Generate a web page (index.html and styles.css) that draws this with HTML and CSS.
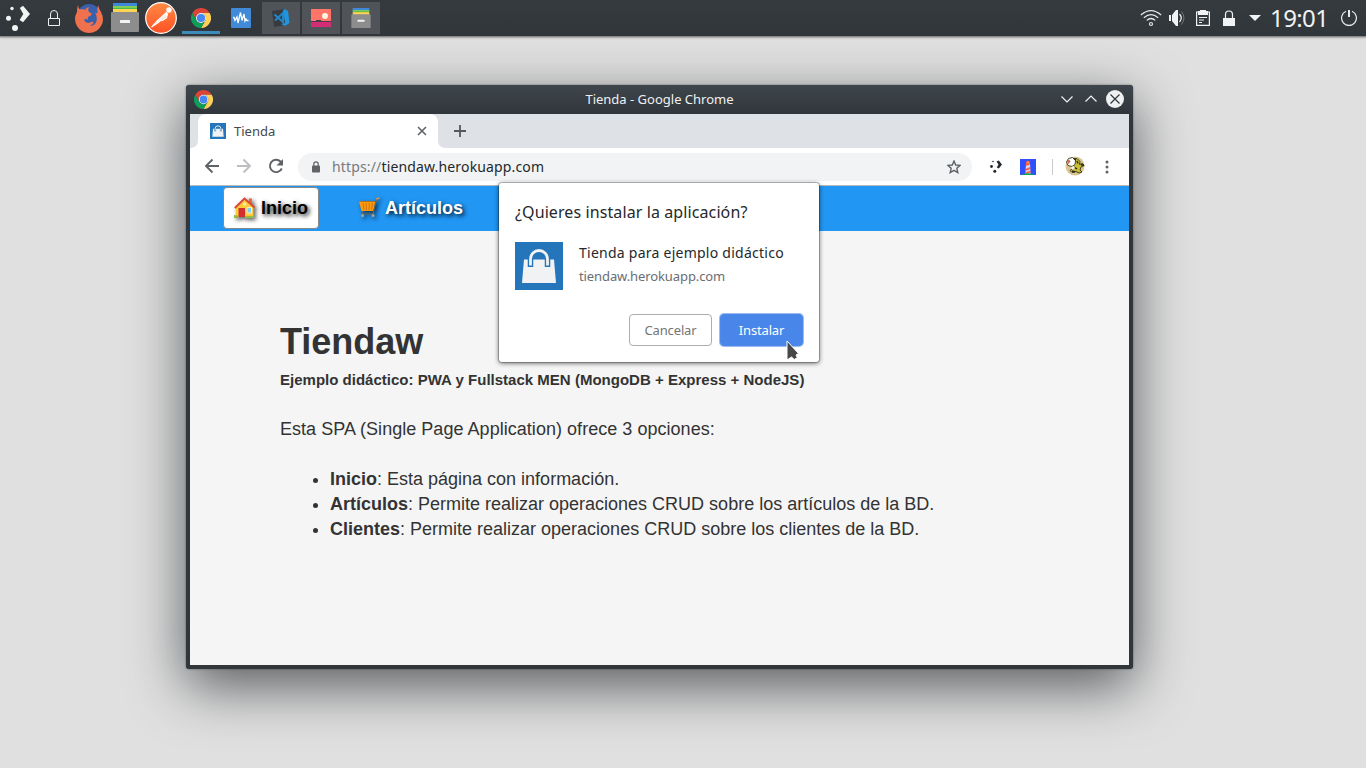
FILE: index.html
```html
<!DOCTYPE html>
<html lang="es">
<head>
<meta charset="utf-8">
<title>Tienda</title>
<link rel="stylesheet" href="styles.css">
</head>
<body>
<svg class="defs" width="0" height="0" aria-hidden="true">
  <defs>
    <linearGradient id="orange" x1="0" y1="0" x2="0" y2="1"><stop offset="0" stop-color="#ff8a45"/><stop offset="1" stop-color="#ff5124"/></linearGradient>
  </defs>
  <symbol id="chrome" viewBox="0 0 48 48">
    <path fill="#dc4437" d="M3.2 12A24 24 0 0 1 44.8 12H24A12 12 0 0 0 13.6 30Z"/>
    <path fill="#ffd057" d="M44.8 12A24 24 0 0 1 24 48L34.4 30A12 12 0 0 0 24 12Z"/>
    <path fill="#109d58" d="M24 48A24 24 0 0 1 3.2 12L13.6 30A12 12 0 0 0 34.4 30Z"/>
    <circle cx="24" cy="24" r="12" fill="#f4f4f4"/><circle cx="24" cy="24" r="9.8" fill="#4687f4"/>
  </symbol>
  <symbol id="drawer" viewBox="0 0 28 29">
    <path fill="#3f87d9" d="M2 0h24v4H2z"/><path fill="#7dce55" d="M2 3h24v3H2z"/><path fill="#4aba4e" d="M2 5h24v1H2z"/><path fill="#ffd452" d="M2 6h24v4H2z"/>
    <path fill="#8d8d8d" d="M1 9h26q1 0 1 1v18q0 1-1 1H1q-1 0-1-1V10q0-1 1-1z"/><rect x="9" y="17" width="10" height="3" rx=".6" fill="#f3f3f3"/>
  </symbol>
  <symbol id="bag" viewBox="0 0 48 48">
    <path fill="#2575ba" d="M0 0h48v48H0z"/><path fill="#f1f2f3" d="M9 17.500h30l2 23.500H7z"/>
    <path fill="none" stroke="#2575ba" stroke-width="5.500" d="M15.500 25v-8a8.500 8.500 0 0 1 17 0v8"/>
    <path fill="none" stroke="#f1f2f3" stroke-width="2.800" d="M15.500 23.500V17a8.500 8.500 0 0 1 17 0v6.500"/>
  </symbol>
</svg>

<header class="panel">
  <div class="launchers">
    <span class="cell"><svg width="26" height="28" viewBox="0 0 26 28" fill="#f3f4f4"><circle cx="7" cy="4.500" r="1.700"/><circle cx="3.500" cy="14.300" r="2.500"/><circle cx="10" cy="24" r="3"/><path d="M14.500 4.500l3.200-2.200 7 8.200-7 8.200-3.400-2.300 3.700-5.900z" transform="translate(.3 -.5)"/></svg></span>
    <span class="cell"><svg width="14" height="18" viewBox="0 0 14 18" fill="none" stroke="#eff0f1"><path d="M1.500 9.500h11v7h-11zM3.500 9V5a3.500 3.500 0 0 1 7 0v4"/></svg></span>
    <span class="cell"><svg class="firefox" width="28" height="30" viewBox="0 0 28 30"><circle cx="14" cy="12.500" r="11.500" fill="#3860ad"/><path fill="#f0714d" d="M3 2Q3 5 5 6.500 8 5.500 10 7q1-2.500 4-3-1.500 3 0 5 1.500 1 3 1.500-.5 2-4 3.500-.5 2 0 3-3-2-4 0 2 4 6 2.500 2-1 3.500-.5 0 2-3.500 3.500 5 1 6.500-4.500 1-5-1.500-8.500l2.500 1Q22 6 23 2q1 4 3 7 4 8 0 14-4 7-12 7T2 23q-4-7 0-14Q2 4 3 2z"/></svg></span>
    <span class="cell"><svg class="files" width="28" height="29"><use href="#drawer"/></svg></span>
    <span class="cell"><svg class="postman" width="32" height="32" viewBox="0 0 32 32"><circle cx="16" cy="16" r="15.300" fill="url(#orange)" stroke="#fff" stroke-width="1.200"/><circle cx="24" cy="8" r="2.700" fill="#fff"/><path d="M21.500 10.500L12 19l1.500 1.500L22.500 12zM12 19l-5.500 6 7-4.500zM22.500 12l-1 4-5 3" fill="#fff" fill-opacity=".75" stroke="#fff" stroke-width="1.100"/></svg></span>
  </div>
  <div class="tasks">
    <span class="task active"><svg width="20" height="20"><use href="#chrome"/></svg></span>
    <span class="task"><svg width="20" height="20" viewBox="0 0 20 20"><rect width="20" height="20" rx="1" fill="#408ad8"/><path fill="none" stroke="#fff" stroke-width="1.300" d="M2 9.500h1l1 3L6 9l1 6L9.500 4.500l1.500 8 2-6.500 1 7 1-2 1 1.500h1.500"/></svg></span>
    <span class="task open"><svg width="20" height="20" viewBox="0 0 20 20"><path fill="#373b40" d="M1 3l13-2 2 16-13 2z"/><path fill="none" stroke="#2286c9" stroke-width="2" d="M3.500 6.500L12 14V5L4 12.500"/><path fill="#2095dd" d="M12 2l2-1 3 2 1.500 12-4.500 3-4-2 4-1z"/></svg></span>
    <span class="task open"><svg width="20" height="18" viewBox="0 0 20 18"><path fill="#ff7568" d="M0 0h20v13H0z"/><path fill="#4b3c4a" d="M0 12h20v1H0zM5 11h5v1H5z"/><path fill="#d32d76" d="M0 13h20v5H0z"/><circle cx="14" cy="7" r="3" fill="#fff6df"/></svg></span>
    <span class="task open"><svg width="20" height="20"><use href="#drawer"/></svg></span>
  </div>
  <div class="tray">
    <span class="tray-cell"><svg width="22" height="18" viewBox="0 0 22 18" fill="none" stroke="#e6e8e9" stroke-width="1.200"><path d="M.8 6Q11-2.800 21.200 6M3.800 8.700q7.200-6.200 14.400 0M6.700 11.400q4.300-3.800 8.600 0"/><circle cx="11" cy="15" r="1.500"/></svg></span>
    <span class="tray-cell"><svg width="18" height="18" viewBox="0 0 18 18"><path fill="#f1f2f3" d="M1 6h2v6H1zM4 6l4-5h2v16H8l-4-5z"/><path fill="none" stroke="#f1f2f3" stroke-width="1.200" d="M11.500 5q3.500 4 0 8"/><path fill="none" stroke="#737678" d="M13.500 2.500q5 6.500 0 13"/></svg></span>
    <span class="tray-cell"><svg width="14" height="16" viewBox="0 0 14 16"><path fill="#f1f2f3" d="M4 0h6v1h2v4H2V1h2z"/><path fill="none" stroke="#f1f2f3" stroke-width="1.200" d="M.6 2v13.400h12.800V2zM3 7.500h8M3 10h5M3 12.500h3"/></svg></span>
    <span class="tray-cell"><svg width="12" height="16" viewBox="0 0 12 16"><path fill="#f1f2f3" d="M0 8h12v8H0z"/><path fill="none" stroke="#f1f2f3" stroke-width="1.200" d="M2.500 8V4.500a3.500 3.500 0 0 1 7 0V8"/></svg></span>
    <span class="tray-cell"><svg width="12" height="6" viewBox="0 0 12 6"><path fill="#f1f2f3" d="M0 0h12L6 6z"/></svg></span>
    <span class="clock">19:01</span>
    <span class="power"><svg width="16" height="16" viewBox="0 0 16 16" fill="none" stroke="#e8eaeb" stroke-width="1.200"><path d="M5 1.200a7.400 7.400 0 1 0 6 0"/><path stroke-width="2" d="M8 0v7"/></svg></span>
  </div>
</header>

<main class="window">
  <div class="titlebar">
    <svg class="app-icon" width="19" height="19"><use href="#chrome"/></svg>
    <span class="window-title">Tienda - Google Chrome</span>
    <svg class="window-buttons" width="63" height="18" viewBox="0 0 63 18" fill="none" stroke="#f1f2f3" stroke-width="1.200"><path d="M.5 6.500L6 12l5.500-5.500M24.500 11.500L30 6l5.500 5.500"/><circle cx="54" cy="9" r="9" fill="#eff0f1" stroke="none"/><path stroke="#30353a" d="M49.500 4.500l9 9m0-9l-9 9"/></svg>
  </div>
  <div class="browser">
    <div class="tabstrip">
      <div class="tab"><svg width="16" height="16"><use href="#bag"/></svg><span class="tab-label">Tienda</span><svg width="10" height="10" viewBox="0 0 10 10" stroke="#5f6368" stroke-width="1.600"><path d="M1 1l8 8m0-8L1 9"/></svg></div>
      <svg class="new-tab" width="12" height="12" viewBox="0 0 12 12" stroke="#55595e" stroke-width="1.800"><path d="M6 0v12M0 6h12"/></svg>
    </div>
    <div class="toolbar">
      <svg class="navigation" width="82" height="16" viewBox="0 0 82 16" fill="none" stroke="#5f6368" stroke-width="1.900"><path d="M15 8H2m6.500-6.500L2 8l6.500 6.500"/><path stroke="#bcbec1" d="M33 8h13m-6.500-6.500L46 8l-6.500 6.500"/><path d="M77.800 10.500A6.200 6.200 0 1 1 76.500 3.500L78 5"/><path fill="#5f6368" stroke="none" d="M79 1v6.500h-6.500z"/></svg>
      <div class="address">
        <svg width="8" height="12" viewBox="0 0 8 12"><rect y="4.500" width="8" height="7" rx=".8" fill="#5f6368"/><path d="M1.800 5V3a2.200 2.200 0 0 1 4.400 0v2" fill="none" stroke="#5f6368" stroke-width="1.200"/></svg>
        <span class="url"><span class="scheme">https://</span>tiendaw.herokuapp.com</span>
        <svg width="14" height="14" viewBox="0 0 14 14" fill="none" stroke="#5f6368" stroke-width="1.400"><path d="M7 1l1.700 4 4.400.4-3.300 2.900 1 4.300L7 10.300l-3.800 2.300 1-4.300L.9 5.400 5.300 5z"/></svg>
      </div>
      <div class="extensions">
        <svg width="12" height="13" viewBox="0 0 12 13" fill="#25292e"><circle cx="3" cy="1.500" r=".8"/><circle cx="1.500" cy="6.500" r="1.400"/><circle cx="4.800" cy="11.300" r="1.500"/><path d="M6.500 1.500L8.800.5 12 4.500 8.800 8.500l-2-1 1.700-3z"/></svg>
        <svg class="lighthouse" width="16" height="16" viewBox="0 0 16 16"><path fill="#304ffe" d="M0 0h16v16H0z"/><path fill="#dcd8ea" d="M6 4h4l.5 11h-5z"/><path fill="#ff6040" d="M6 3q2-3 4 0v2.500L6 7zM5.800 9.800l4.400-1.800v2l-4.500 2zM5.500 13.500l5-2v2l-5 1.500z"/><path fill="#ffe22b" d="M7.500 3h1v1h-1z"/><path fill="#00a653" d="M1 16q7-3.500 14 0z"/></svg>
        <span class="divider"></span>
        <svg class="avatar" width="20" height="20" viewBox="0 0 20 20"><circle cx="10" cy="10" r="9.500" fill="#d9c492"/><path fill="#cabe35" stroke="#34301a" stroke-width=".9" d="M8 3l4-.5 3 3-.5 3 3-1 1.500 2-3 1.500-1 3 2 2-3 1-3-1.500-4 1-2-2 3-2-2-3z"/><path fill="#fff" stroke="#3b351c" stroke-width=".9" d="M1.500 6l2-3.500 4-1 3 3-.5 4-3 2-4-1z"/><path fill="#c9694f" d="M2 5.500l2-2 1.500 2L3.500 8z"/><path fill="none" stroke="#252716" stroke-width="1.400" d="M9 2.500l2 2M12 5l1 2.500M16 8.500l3 1M9 11l3 2M7 15l3 1"/><path fill="#f4f2e2" d="M6 11l3-1 1 2-3 2z"/></svg>
        <svg class="menu" width="4" height="14" viewBox="0 0 4 14" fill="#5f6368"><circle cx="2" cy="2" r="1.500"/><circle cx="2" cy="7" r="1.500"/><circle cx="2" cy="12" r="1.500"/></svg>
      </div>
    </div>
    <nav class="site-nav">
      <a class="nav-item selected"><svg width="22" height="22" viewBox="0 0 22 22"><path fill="#e8683c" d="M15 1.500h3V6h-3z"/><path fill="#ffca3c" d="M2 10l8.500-8L19.500 10v10H2z"/><path fill="none" stroke="#dc4638" stroke-width="2" d="M.8 11L10.500 1.500 20.500 10.500"/><path fill="#d32f2f" d="M4.500 11H11v9H4.500z"/><path fill="#7bd2f4" stroke="#fff3c8" d="M13 10.500h4.500v5.500H13z"/><path fill="#92bd3f" d="M0 18l4 .5V21H0zM11 19h9v2h-9z"/><circle cx="10.500" cy="7" r="1.700" fill="#fdeaa1"/></svg><span>Inicio</span></a>
      <a class="nav-item cart"><svg width="22" height="22" viewBox="0 0 22 22"><path fill="#ff9a0a" d="M1 4.500h16.500l-2 9.500H3.500z"/><path fill="none" stroke="#bd6817" stroke-width=".8" d="M5 6l1 7M8 6l.5 7M11.300 6l-.3 7M14.500 6l-1 7M1 4.500h16.500"/><path fill="none" stroke="#6e6552" stroke-width="1.200" d="M20.500 1.500l-2 .5L15 17H4M3.500 14l1 3"/><path stroke="#d2964c" stroke-width="1.500" d="M18 2l3.500-1"/><circle cx="4.500" cy="18.500" r="1.500" fill="#a8a39a"/><circle cx="15" cy="18.500" r="1.500" fill="#a8a39a"/></svg><span>Artículos</span></a>
    </nav>
    <article class="page">
      <h1>Tiendaw</h1>
      <h2>Ejemplo didáctico: PWA y Fullstack MEN (MongoDB + Express + NodeJS)</h2>
      <p>Esta SPA (Single Page Application) ofrece 3 opciones:</p>
      <ul><li><b>Inicio</b>: Esta página con información.</li><li><b>Artículos</b>: Permite realizar operaciones CRUD sobre los artículos de la BD.</li><li><b>Clientes</b>: Permite realizar operaciones CRUD sobre los clientes de la BD.</li></ul>
    </article>
  </div>
  <section class="dialog">
    <div class="dialog-title">¿Quieres instalar la aplicación?</div>
    <div class="app-info"><svg width="48" height="48"><use href="#bag"/></svg><div><div class="app-name">Tienda para ejemplo didáctico</div><div class="app-host">tiendaw.herokuapp.com</div></div></div>
    <div class="actions"><button class="cancel">Cancelar</button><button class="install">Instalar</button></div>
    <svg class="cursor" width="15" height="22" viewBox="0 0 15 22"><path fill="#474747" stroke="#fff" d="M1 1l11.500 12.500-2.500 1.500 1.300 2.500-3 2-2.800-2.500-4.500 3z"/></svg>
  </section>
</main>
</body>
</html>
```
FILE: styles.css
```css
* { box-sizing: border-box; }
body { margin: 0; height: 768px; overflow: hidden; background: #e0e0e0; font-family: "Noto Sans", sans-serif; }
svg { display: block; flex-shrink: 0; }
.defs { position: absolute; }
.panel { height: 36px; display: flex; background: linear-gradient(#353a3e, #31363b); box-shadow: 0 1px 1px #898989, 0 2px 2px #aaa; }
.launchers, .tasks, .tray { display: flex; align-items: center; }
.launchers { width: 182px; }
.cell { width: 36px; height: 36px; display: flex; align-items: center; justify-content: center; }
.cell svg { margin-top: -1px; }
.cell:first-child svg { margin-top: -1px; }
.cell .firefox { margin: -1px 2px 0 0; }
.cell .files { margin: -1px 2px 0 0; }
.cell .postman { margin: 0 2px 0 0; }
.tasks { gap: 2px; }
.task { width: 38px; height: 32px; display: flex; align-items: center; justify-content: center; }
.task.active { border-bottom: 3px solid #3c8bb9; padding-top: 3px; }
.task.open { background: #505459; }
.tray { margin-left: auto; }
.tray-cell { width: 26px; display: flex; justify-content: center; }
.clock { width: 63px; padding-left: 2px; color: #f1f2f3; font-size: 24px; line-height: 36px; letter-spacing: -.6px; white-space: nowrap; }
.power { width: 35px; display: flex; justify-content: center; }
.window { position: relative; width: 947px; height: 584px; margin: 49px 0 0 186px; padding: 0 4px 4px; background: #31363b; border-radius: 4px 4px 3px 3px; box-shadow: 0 17px 55px rgba(20,25,30,.68), 0 0 2px rgba(0,0,0,.5); }
.titlebar { height: 29px; margin: 0 -4px; padding: 0 9px 0 8px; display: flex; align-items: center; justify-content: space-between; border-radius: 3px 3px 0 0; background: linear-gradient(#3e454c, #31363b); color: #eff0f1; font-size: 13px; }
.window-title { margin-top: -2px; }
.window-buttons, .app-icon { margin-top: -1px; }
.app-icon { margin-right: 45px; }
.browser { height: 551px; display: flex; flex-direction: column; background: #f5f5f5; }
.tabstrip { height: 34px; padding-left: 8px; display: flex; align-items: center; background: #dee1e6; }
.tab { width: 240px; height: 34px; padding: 0 11px 0 12px; display: flex; align-items: center; gap: 8px; border-radius: 8px 8px 0 0; background: #fff; color: #45494d; font-size: 13px; box-shadow: -8px 8px 0 #fff, 8px 8px 0 #fff; clip-path: path("M-8 34Q0 34 0 26V8Q0 0 8 0H232Q240 0 240 8V26Q240 34 248 34Z"); }
.tab-label { flex: 1; }
.new-tab { margin-left: 16px; }
.toolbar { height: 38px; padding: 0 16px 0 14px; display: flex; align-items: center; background: #fff; border-bottom: 1px solid #b8b9bb; }
.navigation { margin: -1px 12px 0 0; }
.address { width: 674px; height: 28px; padding: 0 11px 0 14px; display: flex; align-items: center; gap: 12px; border-radius: 14px; background: #f1f3f4; }
.url { flex: 1; font-size: 14px; letter-spacing: .15px; color: #25282b; }
.scheme { color: #777a7e; }
.extensions { margin-left: 18px; display: flex; align-items: center; }
.lighthouse { margin-left: 18px; }
.divider { width: 1px; height: 16px; margin: 0 12px 0 16px; background: #c8cacc; }
.avatar { margin-top: -2px; }
.menu { margin-left: 20px; }
.site-nav { height: 45px; padding: 1px 33px 2px; display: flex; gap: 28px; background: #2196f3; }
.nav-item { height: 42px; padding: 0 11px; display: flex; align-items: center; gap: 5px; color: #fff; font: bold 18px "Liberation Sans", sans-serif; text-shadow: 2px 2px 4px rgba(0,0,0,.9); }
.nav-item svg { filter: drop-shadow(2px 2px 2px rgba(0,0,0,.65)); }
.nav-item.selected { width: 96px; padding: 0 10px; color: #000; background: #fff; border: 1px solid #888; border-radius: 4px; }
.page { padding: 90px 90px 0; color: #333; font: 18px/25px "Liberation Sans", sans-serif; }
.page h1 { margin: 0; font-size: 36px; line-height: 41px; }
.page h2 { margin: 8px 0 0; font-size: 15px; line-height: 20px; letter-spacing: .01px; }
.page p { margin: 27px 0 25px; letter-spacing: .035px; }
.page ul { margin: 0; padding-left: 50px; }
.dialog { position: absolute; left: 313px; top: 98px; width: 320px; height: 179px; padding: 18px 16px 16px; border-radius: 3px; background: #fff; color: #25282c; box-shadow: 0 0 0 1px rgba(0,0,0,.2), 0 1px 5px rgba(0,0,0,.65); }
.dialog-title { font-size: 16px; line-height: 23px; letter-spacing: .1px; }
.app-info { margin-top: 18px; display: flex; gap: 16px; }
.app-name { font-size: 14px; line-height: 22px; letter-spacing: .25px; }
.app-host { margin-top: 2px; color: #696d72; font-size: 13px; line-height: 20px; letter-spacing: -.1px; }
.actions { margin-top: 24px; display: flex; justify-content: flex-end; gap: 8px; }
.actions button { height: 32px; padding: 0; border-radius: 4px; font: 13px "Noto Sans", sans-serif; letter-spacing: -.15px; }
.cancel { width: 83px; border: 1px solid #adadad; background: #fff; color: #757575; }
.install { width: 83px; border: 1px solid #4c88e8; background: #4886e9; color: #fff; box-shadow: 0 0 0 1px #9bbcf2; }
.cursor { position: absolute; left: 287px; top: 157px; }
```
